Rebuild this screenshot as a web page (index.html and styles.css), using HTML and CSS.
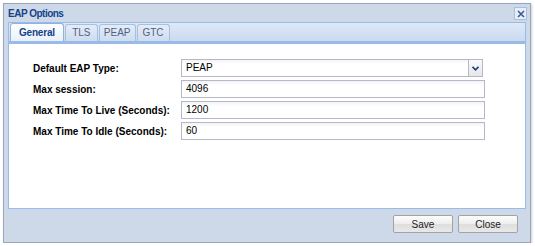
FILE: index.html
```html
<!DOCTYPE html>
<html lang="en">
<head>
    <meta charset="UTF-8">
    <title>EAP Options</title>
    <link rel="stylesheet" href="styles.css">
</head>
<body>
<div class="window">
    <div class="header">
        <span class="title">EAP Options</span>
        <span class="close">
            <svg width="8" height="8" viewBox="0 0 8 8"><path d="M1 1L7 7M7 1L1 7" stroke="#3a5a9c" stroke-width="1.6"/></svg>
        </span>
    </div>
    <div class="tabpanel">
        <div class="tabs">
            <div class="tab active">General</div>
            <div class="tab">TLS</div>
            <div class="tab">PEAP</div>
            <div class="tab">GTC</div>
        </div>
        <div class="panel">
            <form class="form">
                <label>Default EAP Type:</label>
                <div class="combo">
                    <span class="combo-value">PEAP</span>
                    <span class="trigger">
                        <svg width="7" height="5" viewBox="0 0 7 5"><path d="M0.5 0.8L3.5 3.8L6.5 0.8" fill="none" stroke="#1f3f85" stroke-width="1.6"/></svg>
                    </span>
                </div>
                <label>Max session:</label>
                <div class="field">4096</div>
                <label>Max Time To Live (Seconds):</label>
                <div class="field">1200</div>
                <label>Max Time To Idle (Seconds):</label>
                <div class="field">60</div>
            </form>
        </div>
    </div>
    <div class="footer">
        <button type="button">Save</button>
        <button type="button">Close</button>
    </div>
</div>
</body>
</html>
```

FILE: styles.css
```css
body {
    margin: 0;
    background: #fff;
    font-family: "Liberation Sans", Arial, sans-serif;
    font-size: 10px;
    color: #000;
}
.window {
    box-sizing: border-box;
    width: 528px;
    height: 240px;
    margin: 3px 0 0 3px;
    border: 1px solid #98a6ba;
    background: #cdd9e8;
    box-shadow: 1px 1px 2px rgba(0, 0, 0, 0.2);
    display: flex;
    flex-direction: column;
}
.header {
    height: 18px;
    display: flex;
    align-items: center;
    justify-content: space-between;
    padding: 0 3px 0 4px;
}
.title {
    font-weight: bold;
    color: #15428b;
    font-size: 10px;
    letter-spacing: -0.5px;
}
.close {
    width: 11px;
    height: 11px;
    border: 1px solid #a9bfdc;
    background: #e8eef8;
    display: flex;
    align-items: center;
    justify-content: center;
    margin-top: 1px;
}
.tabpanel {
    margin: 0 4px;
    display: flex;
    flex-direction: column;
}
.tabs {
    height: 18px;
    border: 1px solid #99bbe8;
    border-bottom: 3px solid #99bbe8;
    background: linear-gradient(#dfe8f6, #cbdaf0);
    display: flex;
    align-items: flex-end;
    gap: 1px;
    padding-left: 1px;
}
.tab {
    height: 16px;
    min-width: 23px;
    text-align: center;
    border: 1px solid #a9bfdc;
    border-bottom: none;
    border-radius: 3px 3px 0 0;
    background: linear-gradient(#e4ecf7, #cedcf0);
    color: #51627f;
    font-size: 10px;
    padding: 0 4px;
    line-height: 16px;
}
.tab.active {
    height: 17px;
    line-height: 18px;
    background: linear-gradient(#ffffff, #e9f0fa);
    border-color: #8db2e3;
    color: #15428b;
    font-weight: bold;
    letter-spacing: -0.2px;
    padding: 0 8px;
}
.panel {
    height: 164px;
    background: #fff;
    border: 1px solid #99bbe8;
    border-top: none;
}
.form {
    display: grid;
    grid-template-columns: 148px 304px;
    row-gap: 3px;
    margin: 15px 0 0 24px;
    align-items: center;
}
.form label {
    font-weight: bold;
}
.field,
.combo {
    box-sizing: border-box;
    height: 18px;
    border: 1px solid #b5b8c8;
    background: linear-gradient(#f3f3f3, #fff 4px);
    padding-left: 4px;
    line-height: 16px;
}
.combo {
    width: 302px;
    display: flex;
    justify-content: space-between;
    padding-right: 0;
}
.trigger {
    width: 13px;
    border-left: 1px solid #b5b8c8;
    background: linear-gradient(#fafafa, #e6e6e6);
    display: flex;
    align-items: center;
    justify-content: center;
}
.footer {
    display: flex;
    justify-content: flex-end;
    gap: 5px;
    padding: 6px 12px 0 0;
}
.footer button {
    width: 60px;
    height: 18px;
    font-family: "Liberation Sans", Arial, sans-serif;
    font-size: 10px;
    color: #222;
    border: 1px solid #a3a3a3;
    border-radius: 2px;
    background: linear-gradient(#fdfdfd, #ededed 50%, #dedede 51%, #e8e8e8);
    padding: 0;
}
```
